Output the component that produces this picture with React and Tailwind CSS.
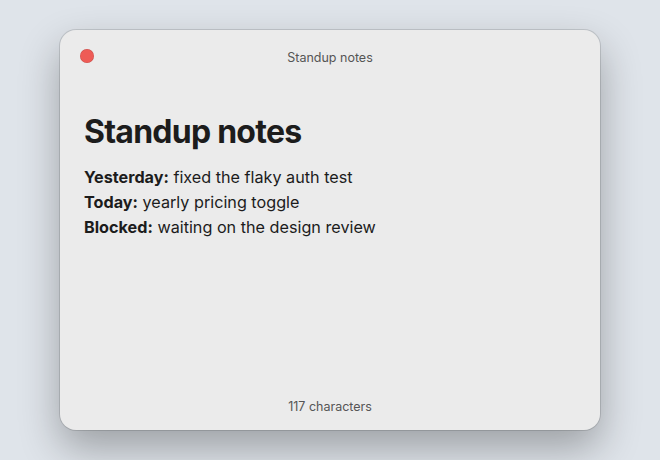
function App() {
  return (
    <div
      className="flex h-[460px] w-[660px] items-center justify-center bg-[#dfe4ea]"
      style={{ fontFamily: "Inter, 'Noto Sans', sans-serif" }}
    >
      <div className="flex h-[400px] w-[540px] flex-col rounded-[16px] bg-[#ebebeb] shadow-[0_18px_40px_rgba(0,0,0,0.3),0_0_0_1px_rgba(0,0,0,0.12)]">
        <div className="relative flex h-[54px] shrink-0 items-center justify-center">
          <span className="absolute left-[20px] top-[19px] h-[14px] w-[14px] rounded-full bg-[#ee5b56] shadow-[inset_0_0_0_0.5px_rgba(0,0,0,0.15)]" />
          <span className="pt-[3px] text-[12.5px] text-[#555555]">Standup notes</span>
        </div>

        <div className="flex-1 px-[24px] pt-[28px]">
          <h1 className="text-[32px] font-bold leading-[40px] tracking-[-0.75px] text-[#1c1c1c]">
            Standup notes
          </h1>
          <div className="mt-[13px] text-[16.2px] leading-[25px] text-[#1c1c1c]">
            <p>
              <strong className="font-bold">Yesterday:</strong> fixed the flaky auth test
            </p>
            <p>
              <strong className="font-bold">Today:</strong> yearly pricing toggle
            </p>
            <p>
              <strong className="font-bold">Blocked:</strong> waiting on the design review
            </p>
          </div>
        </div>

        <div className="flex h-[48px] shrink-0 items-center justify-center pt-[2px]">
          <span className="text-[12.5px] text-[#555555]">117 characters</span>
        </div>
      </div>
    </div>
  )
}

export default App
